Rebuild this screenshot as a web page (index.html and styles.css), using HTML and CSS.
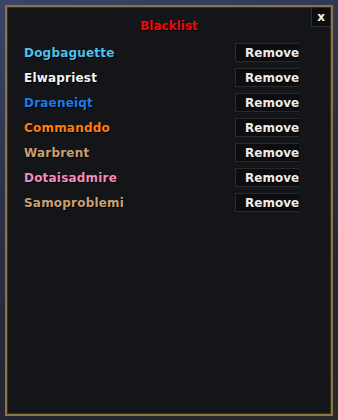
FILE: index.html
```html
<!DOCTYPE html>
<html>
<head>
<meta charset="utf-8">
<link rel="stylesheet" href="styles.css">
</head>
<body>
<div class="frame">
  <div class="panel">
    <div class="header">
      <div class="title">Blacklist</div>
      <button class="close">x</button>
    </div>
    <div class="list">
      <div class="row"><span class="name c-mage">Dogbaguette</span><button class="remove">Remove</button></div>
      <div class="row"><span class="name c-priest">Elwapriest</span><button class="remove">Remove</button></div>
      <div class="row"><span class="name c-shaman">Draeneiqt</span><button class="remove">Remove</button></div>
      <div class="row"><span class="name c-druid">Commanddo</span><button class="remove">Remove</button></div>
      <div class="row"><span class="name c-warrior">Warbrent</span><button class="remove">Remove</button></div>
      <div class="row"><span class="name c-paladin">Dotaisadmire</span><button class="remove">Remove</button></div>
      <div class="row"><span class="name c-warrior">Samoproblemi</span><button class="remove">Remove</button></div>
    </div>
  </div>
</div>
</body>
</html>
```
FILE: styles.css
```css
html, body {
  margin: 0;
  padding: 0;
  width: 338px;
  height: 420px;
  overflow: hidden;
}
body {
  background: linear-gradient(160deg, #3a4468 0%, #2a3048 40%, #22252e 80%, #2a2a2c 100%);
  font-family: "DejaVu Sans", Verdana, sans-serif;
}
.frame {
  padding: 5px 5px 4px 5px;
  height: 420px;
  box-sizing: border-box;
}
.panel {
  position: relative;
  height: 100%;
  box-sizing: border-box;
  border: 2px solid #8b7545;
  box-shadow: inset 0 0 0 1px #3a3020;
  background: #141519;
}
.header {
  height: 36px;
  display: flex;
  align-items: center;
  justify-content: center;
}
.title {
  color: #ee0a0a;
  font-weight: bold;
  font-size: 12px;
  padding-top: 2px;
  text-shadow: 1px 1px 0 #000;
}
.close {
  position: absolute;
  top: 0;
  right: 0;
  width: 20px;
  height: 20px;
  margin: 0;
  padding: 0;
  background: #0c0c0e;
  border: 1px solid #2c2c2e;
  color: #f4f4f4;
  font-family: "DejaVu Sans", sans-serif;
  font-weight: bold;
  font-size: 12px;
  line-height: 16px;
}
.list {
  display: flex;
  flex-direction: column;
  gap: 6px;
  padding: 0 32px 0 17px;
}
.row {
  display: flex;
  align-items: center;
  justify-content: space-between;
  height: 19px;
}
.name {
  font-weight: bold;
  font-size: 12px;
  letter-spacing: 0.2px;
  text-shadow: 1px 1px 0 #000;
}
.remove {
  width: 64px;
  height: 19px;
  margin: 0;
  padding: 0 0 0 9px;
  text-align: left;
  background: #0d0d0f;
  border: 1px solid #2a2a2c;
  border-right: none;
  color: #ececec;
  font-family: "DejaVu Sans", sans-serif;
  font-weight: bold;
  font-size: 12px;
  letter-spacing: 0;
  text-shadow: 1px 1px 0 #000;
  white-space: nowrap;
}
.c-mage { color: #4fc0ea; }
.c-priest { color: #f2f2f2; }
.c-shaman { color: #1f7ae6; }
.c-druid { color: #ff7d0a; }
.c-warrior { color: #c9a071; }
.c-paladin { color: #f58cba; }
```
